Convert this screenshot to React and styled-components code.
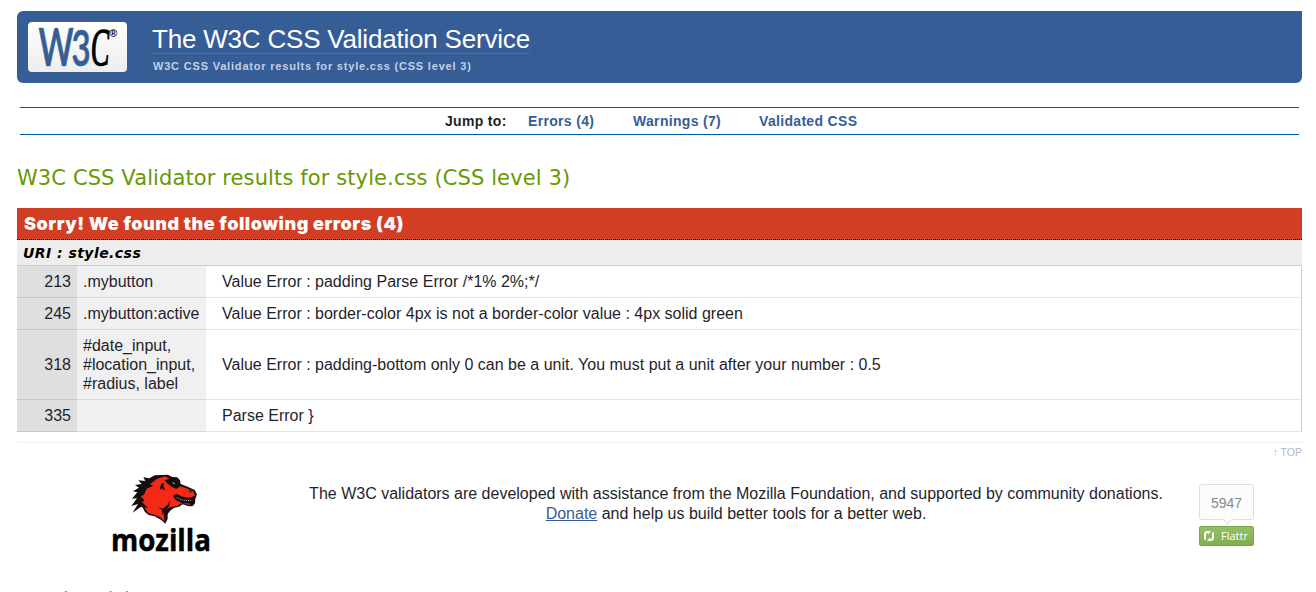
import React from "react";
import styled, { createGlobalStyle } from "styled-components";

const Global = createGlobalStyle`
  * { box-sizing: border-box; }
  html, body { margin: 0; height: 592px; overflow: hidden; background: #fff; }
  body { font: 16px/19px "Liberation Sans", Arial, sans-serif; color: #1f1f2b; }
`;
const Page = styled.div`height: 592px; overflow: hidden; padding: 11px 14px 0 17px;`;
const Banner = styled.header`
  display: flex; height: 72px; padding: 11px; background: #365d95;
  border-radius: 6px 0 6px 6px;
`;
const LogoCard = styled.a`
  width: 99px; height: 50px; border-radius: 4px;
  background: linear-gradient(#fff, #ededed);
  svg { display: block; overflow: visible; }
`;
const Titles = styled.div`margin-left: 25px; display: flex; flex-direction: column; align-items: flex-start;`;
const Title = styled.h1`
  margin: 0; height: 32px; font-size: 26px; line-height: 34px; font-weight: 400; color: #fff;
  letter-spacing: -.2px; white-space: nowrap; border-bottom: 1px solid #4f71a5;
`;
const Subtitle = styled.p`
  margin: 6px 0 0 1px; font-size: 11px; line-height: 13px; font-weight: 700; letter-spacing: .81px;
  color: #c3d0e6; white-space: nowrap;
`;
const Jump = styled.nav`
  display: flex; height: 28px; margin: 24px 3px 0; padding-left: 425px;
  border: solid #005a9c; border-width: 1px 0; align-items: center;
  font-size: 14px; font-weight: 700; letter-spacing: .32px; white-space: nowrap;
`;
const JumpLabel = styled.span`width: 83px; color: #1f1f1f;`;
const JumpLink = styled.a`width: ${p => p.$w}px; color: #365d95;`;
const Heading = styled.h2`
  margin: 28px 0 0; height: 45px; color: #690; white-space: nowrap;
  font: 400 21px/30px "DejaVu Sans", Verdana, sans-serif; letter-spacing: .11px;
`;
const SectionHeading = styled(Heading)`margin: 0; height: 30px; font-size: 18px; letter-spacing: 0;`;
const ErrorBar = styled.h3`
  margin: 0; height: 32px; padding-left: 7px; background: #d23d24; border-bottom: 1px dotted #000;
  font: 900 18px/32px Inter, sans-serif; letter-spacing: .53px; color: #fff;
`;
const UriBar = styled.h4`
  margin: 0; height: 26px; padding-left: 6px; background: #ededed; border-bottom: 1px solid #ccc;
  font: italic 700 14px/26px "DejaVu Sans", Verdana, sans-serif; letter-spacing: .45px; color: #000;
`;
const Table = styled.div`border-right: 1px solid #ccc;`;
const Row = styled.div`display: grid; grid-template-columns: 60px 129px 1fr; height: ${p => p.$h || 32}px;`;
const Cell = styled.div`display: flex; align-items: center; border-bottom: 1px solid #f6dcdc;`;
const LineCell = styled(Cell)`justify-content: flex-end; padding-right: 6px; background: #dfdfdf; border-color: #c6c6c6;`;
const SelectorCell = styled(Cell)`padding-left: 6px; background: #f0f0f0; border-color: #dadada;`;
const MessageCell = styled(Cell)`padding-left: 16px;`;
const TopLink = styled.div`
  margin-top: 10px; height: 32px; border-top: 1px solid #eef; text-align: right;
  font-size: 10.5px; line-height: 19px; color: #b5b5c9;
`;
const Footer = styled.footer`display: flex; height: 110px;`;
const MozillaLogo = styled.svg`display: block; flex: none; overflow: visible; margin-left: 91px; width: 110px; height: 84px;`;
const Credit = styled.p`
  margin: 10px 0 0 75px; width: 886px; flex: none; text-align: center; line-height: 20px; white-space: nowrap;
  a { color: #365d95; text-decoration: underline; }
`;
const Flattr = styled.div`margin: 10px 0 0 20px; width: 55px;`;
const Count = styled.div`
  position: relative; height: 36px; border: 1px solid #dedede; border-radius: 3px; background: #fcfcfc;
  font-size: 14px; line-height: 37px; text-align: center; color: #888;
  &::after {
    content: ""; position: absolute; left: 24px; bottom: -4px; width: 6px; height: 6px;
    background: #fcfcfc; border: solid #dedede; border-width: 0 1px 1px 0; transform: rotate(45deg);
  }
`;
const FlattrButton = styled.div`
  display: flex; align-items: center; gap: 6px; height: 20px; margin-top: 6px; padding-left: 3px;
  border: 1px solid #7ba350; border-radius: 2px; background: linear-gradient(#95bf63, #82ae52);
  font: 11px/18px "Open Sans", sans-serif; color: #fff;
`;

const errors = [
  [213, ".mybutton", "Value Error : padding Parse Error /*1% 2%;*/"],
  [245, ".mybutton:active", "Value Error : border-color 4px is not a border-color value : 4px solid green"],
  [318, "#date_input, #location_input, #radius, label", "Value Error : padding-bottom only 0 can be a unit. You must put a unit after your number : 0.5", 70],
  [335, "", "Parse Error }"],
];

function W3CLogo() {
  return (
    <svg width="99" height="50" viewBox="28 22 99 50" aria-label="W3C">
      <g fill="#365d95" stroke="#365d95" strokeWidth=".7" fontFamily="Lato">
        <text transform="translate(38.5 66) scale(.66 1)" fontSize="51" fontWeight="600">W</text>
        <text transform="translate(71.5 65.5) scale(.66 1)" fontSize="50" fontWeight="600">3</text>
      </g>
      <text transform="translate(90 65) skewX(-4) scale(.53 1)" fontSize="53" fontFamily="Liberation Serif" stroke="#000" strokeWidth="1.3">C</text>
      <text x="109.5" y="37" fontSize="10.5" fontFamily="Liberation Sans" fontWeight="700">®</text>
    </svg>
  );
}

function Mozilla() {
  return (
    <MozillaLogo viewBox="108 474 110 84" aria-label="mozilla">
      <g transform="translate(126 470) scale(.3333)">
        <path fill="#140e0e" d="M118 161L106 150 86 139 68 135 57 126 49 111 43 112 20 128 36 102 16 108 33 85 18 86 34 67 21 64 39 53 27 45 47 42 37 31 58 33 52 22 70 25 86 16 108 15 125 14 139 21 154 22 162 31 164 42 187 51 206 60 213 73 208 87 207 100 201 108 188 109 170 103 159 110 145 113 134 121 125 132 125 146Z" />
        <path fill="#f42a17" d="M62 56L82 47 72 43 92 27 118 19 130 26 116 31 123 40 137 50 151 57 163 49 185 56 204 66 206 78 190 83 170 80 152 72 141 77 149 90 165 98 194 101 190 105 170 99 152 108 134 111 119 119 113 132 116 154 101 141 85 134 67 130 55 112 66 114 48 96 56 91 44 79 54 74Z" />
        <path fill="#140e0e" d="M106 42l9-3-3 9 6 14-10-7-7 6 2-11zM96 112l14 4 14-10 8-14-2 16-12 14-8 12-2-14zM130 31l20 4 7 12-10-1-12-9zM187 61l11 4-5 3z" />
        <path d="M150 83l13 7 16 3 21 0" fill="none" stroke="#140e0e" strokeWidth="7" />
        <path d="M152 83l13 6 15 3 18 0" fill="none" stroke="#ddd" strokeWidth="2.5" strokeDasharray="3 3" />
        <path d="M139 38l8 3" stroke="#eee" strokeWidth="2" />
      </g>
      <text x="111" y="551" fontFamily="Open Sans" fontWeight="700" fontSize="30.5" stroke="#000" strokeWidth=".5" textLength="100" lengthAdjust="spacingAndGlyphs">mozilla</text>
    </MozillaLogo>
  );
}

export default function App() {
  return (
    <Page>
      <Global />
      <Banner>
        <LogoCard><W3CLogo /></LogoCard>
        <Titles>
          <Title>The W3C CSS Validation Service</Title>
          <Subtitle>W3C CSS Validator results for style.css (CSS level 3)</Subtitle>
        </Titles>
      </Banner>
      <Jump>
        <JumpLabel>Jump to:</JumpLabel>
        <JumpLink $w={105}>Errors (4)</JumpLink>
        <JumpLink $w={126}>Warnings (7)</JumpLink>
        <JumpLink $w={100}>Validated CSS</JumpLink>
      </Jump>
      <Heading>W3C CSS Validator results for style.css (CSS level 3)</Heading>
      <ErrorBar>Sorry! We found the following errors (4)</ErrorBar>
      <UriBar>URI : style.css</UriBar>
      <Table>
        {errors.map(([line, selector, message, h]) => (
          <Row key={line} $h={h}>
            <LineCell>{line}</LineCell>
            <SelectorCell>{selector}</SelectorCell>
            <MessageCell>{message}</MessageCell>
          </Row>
        ))}
      </Table>
      <TopLink>↑ TOP</TopLink>
      <Footer>
        <Mozilla />
        <Credit>
          The W3C validators are developed with assistance from the Mozilla Foundation, and supported by community donations.<br />
          <a>Donate</a> and help us build better tools for a better web.
        </Credit>
        <Flattr>
          <Count>5947</Count>
          <FlattrButton>
            <svg width="12" height="12" viewBox="0 0 12 12" fill="#fff">
              <path d="M1 9V4.500Q1 1 4.500 1H8L5 5V2.800Q3 3 3 5V9Q3 10 2 10ZM11 3V7.500Q11 11 7.500 11H4L7 7V9.200Q9 9 9 7V3Q9 2 10 2Z" />
            </svg>
            Flattr
          </FlattrButton>
        </Flattr>
      </Footer>
      <SectionHeading>Warnings (7)</SectionHeading>
    </Page>
  );
}
